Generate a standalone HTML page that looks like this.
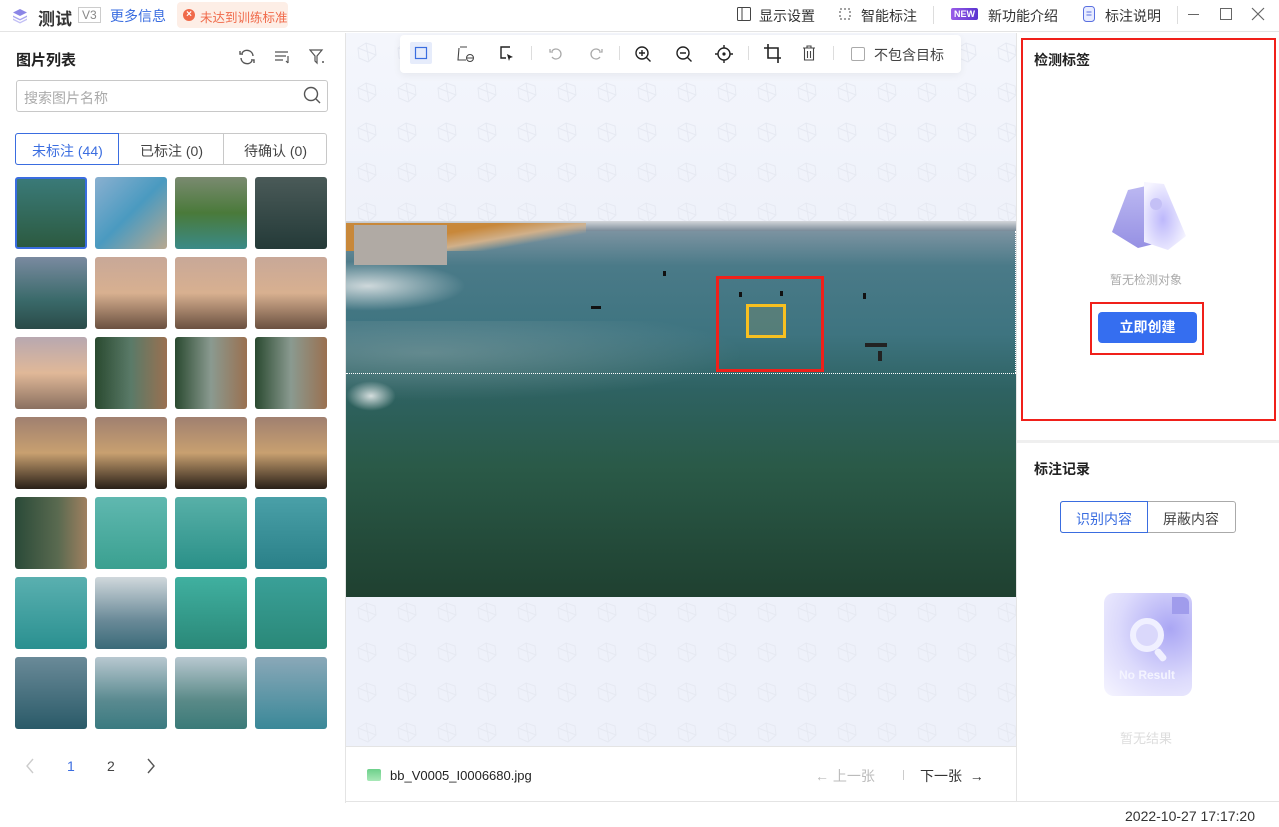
<!DOCTYPE html>
<html><head><meta charset="utf-8"><style>
*{margin:0;padding:0;box-sizing:border-box}
body{width:1279px;height:827px;overflow:hidden;background:#fff;font-family:"Liberation Sans","Noto Sans CJK SC",sans-serif;color:#333;position:relative;font-size:14px}
.a{position:absolute}
.t{position:absolute;white-space:nowrap}
.th{position:absolute;width:72px;height:72px;border-radius:3px}
svg{position:absolute}
</style></head><body>
<!-- top bar -->
<div class="a" style="left:0;top:0;width:1279px;height:32px;background:#fff;border-bottom:1px solid #e4e4e4"></div>
<svg style="left:12px;top:8px" width="16" height="16" viewBox="0 0 16 16"><path d="M8 1L15 4.5 8 8 1 4.5z" fill="#8b86e6"/><path d="M1 7.5L8 11 15 7.5 15 9 8 12.5 1 9z" fill="#a9a4ef"/><path d="M1 10.5L8 14 15 10.5 15 12 8 15.5 1 12z" fill="#c2bff5"/></svg>
<div class="t" style="left:38px;top:5px;font-size:17px;font-weight:bold;color:#333">测试</div>
<div class="t" style="left:78px;top:7px;font-size:12px;color:#888;border:1px solid #ccc;padding:0 3px;line-height:14px">V3</div>
<div class="t" style="left:110px;top:6px;font-size:14px;color:#3a6de0">更多信息</div>
<div class="a" style="left:177px;top:2px;width:111px;height:26px;background:#fdeee6;border-radius:4px"></div>
<div class="a" style="left:183px;top:9px;width:12px;height:12px;border-radius:50%;background:#f06a4a;color:#fff;font-size:10px;line-height:12px;text-align:center;font-weight:bold">×</div>
<div class="t" style="left:200px;top:7px;font-size:12.5px;color:#f06a4a">未达到训练标准</div>
<svg style="left:737px;top:7px" width="14" height="14"><rect x="0.5" y="0.5" width="13" height="13" rx="1" fill="none" stroke="#444"/><line x1="5" y1="0" x2="5" y2="14" stroke="#444"/></svg>
<div class="t" style="left:759px;top:6px;font-size:14px;color:#333">显示设置</div>
<svg style="left:838px;top:7px" width="14" height="14"><rect x="2" y="2" width="10" height="10" fill="none" stroke="#444" stroke-dasharray="2 2"/></svg>
<div class="t" style="left:861px;top:6px;font-size:14px">智能标注</div>
<div class="a" style="left:933px;top:6px;width:1px;height:18px;background:#ddd"></div>
<div class="t" style="left:951px;top:8px;font-size:9px;font-weight:bold;color:#fff;background:linear-gradient(90deg,#9a5ce8,#5a34d0);padding:0 3px;line-height:12px;border-radius:2px">NEW</div>
<div class="t" style="left:988px;top:6px;font-size:14px">新功能介绍</div>
<svg style="left:1083px;top:6px" width="12" height="16"><rect x="0.5" y="0.5" width="11" height="15" rx="3" fill="#e8ecff" stroke="#5a70e0"/><line x1="3.5" y1="6" x2="8.5" y2="6" stroke="#5a70e0"/><line x1="3.5" y1="9" x2="8.5" y2="9" stroke="#5a70e0"/></svg>
<div class="t" style="left:1105px;top:6px;font-size:14px">标注说明</div>
<div class="a" style="left:1177px;top:6px;width:1px;height:18px;background:#ddd"></div>
<div class="a" style="left:1188px;top:14px;width:11px;height:1px;background:#666"></div>
<div class="a" style="left:1220px;top:8px;width:12px;height:12px;border:1px solid #666"></div>
<svg style="left:1251px;top:7px" width="14" height="14"><path d="M1 1L13 13M13 1L1 13" stroke="#666" stroke-width="1.2"/></svg>

<!-- left panel -->
<div class="a" style="left:345px;top:33px;width:1px;height:770px;background:#e4e4e4"></div>
<div class="t" style="left:16px;top:49px;font-size:15px;font-weight:bold;color:#222">图片列表</div>
<svg style="left:238px;top:48px" width="18" height="18" viewBox="0 0 18 18"><path d="M15 8A6 6 0 0 0 4 5M3 10a6 6 0 0 0 11 3" fill="none" stroke="#555" stroke-width="1.4"/><path d="M2 3v3h3M16 15v-3h-3" fill="none" stroke="#555" stroke-width="1.4"/></svg>
<svg style="left:275px;top:50px" width="16" height="14"><path d="M0 2h13M0 6h11M0 10h8" stroke="#555" stroke-width="1.2"/><path d="M13 6v7M11 11l2 2" stroke="#555" stroke-width="1.2" fill="none"/></svg>
<svg style="left:309px;top:49px" width="16" height="16"><path d="M1 1h12l-5 6v7l-2-2V7z" fill="none" stroke="#555" stroke-width="1.2"/><circle cx="14" cy="13" r="1" fill="#555"/></svg>
<div class="a" style="left:16px;top:80px;width:312px;height:32px;border:1px solid #c8c8c8;border-radius:3px"></div>
<div class="t" style="left:24px;top:88px;font-size:14px;color:#aaa">搜索图片名称</div>
<svg style="left:303px;top:86px" width="18" height="18"><circle cx="8" cy="8" r="6.5" fill="none" stroke="#555" stroke-width="1.4"/><path d="M13 13l4 4" stroke="#555" stroke-width="1.4"/></svg>
<div class="a" style="left:15px;top:133px;width:312px;height:32px;border:1px solid #c8c8c8;border-radius:3px"></div>
<div class="a" style="left:15px;top:133px;width:104px;height:32px;border:1px solid #3a6de0;border-radius:3px 0 0 3px"></div>
<div class="a" style="left:223px;top:134px;width:1px;height:30px;background:#c8c8c8"></div>
<div class="t" style="left:32px;top:141px;font-size:14px;color:#3a6de0">未标注 (44)</div>
<div class="t" style="left:140px;top:141px;font-size:14px;color:#444">已标注 (0)</div>
<div class="t" style="left:244px;top:141px;font-size:14px;color:#444">待确认 (0)</div>

<div class="th" style="left:15px;top:177px;background:linear-gradient(#3a7a78,#2c5a40);border:2px solid #3a6de0"></div>
<div class="th" style="left:95px;top:177px;background:linear-gradient(135deg,#8ab0d0,#4a9ac0 50%,#b8a890)"></div>
<div class="th" style="left:175px;top:177px;background:linear-gradient(#7a8a70,#4a7a3a 50%,#3a8a88)"></div>
<div class="th" style="left:255px;top:177px;background:linear-gradient(#4a5a58,#243a38)"></div>
<div class="th" style="left:15px;top:257px;background:linear-gradient(#7a8aa0,#3a6a6a 60%,#2a4a48)"></div>
<div class="th" style="left:95px;top:257px;background:linear-gradient(#c8a898,#d8b090 50%,#6a5040)"></div>
<div class="th" style="left:175px;top:257px;background:linear-gradient(#c8a898,#d8b090 50%,#6a5040)"></div>
<div class="th" style="left:255px;top:257px;background:linear-gradient(#c8a898,#d8b090 50%,#6a5040)"></div>
<div class="th" style="left:15px;top:337px;background:linear-gradient(#b8a8b0,#e0b898 50%,#8a7060)"></div>
<div class="th" style="left:95px;top:337px;background:linear-gradient(90deg,#2a4a30,#5a7a68 50%,#9a7050)"></div>
<div class="th" style="left:175px;top:337px;background:linear-gradient(90deg,#2a4a30,#8a9a90 50%,#9a7050)"></div>
<div class="th" style="left:255px;top:337px;background:linear-gradient(90deg,#2a4a30,#8a9a90 50%,#9a7050)"></div>
<div class="th" style="left:15px;top:417px;background:linear-gradient(#a08070,#c8a070 50%,#2a2018)"></div>
<div class="th" style="left:95px;top:417px;background:linear-gradient(#a08070,#c8a070 50%,#2a2018)"></div>
<div class="th" style="left:175px;top:417px;background:linear-gradient(#a08070,#c8a070 50%,#2a2018)"></div>
<div class="th" style="left:255px;top:417px;background:linear-gradient(#a08070,#c8a070 50%,#2a2018)"></div>
<div class="th" style="left:15px;top:497px;background:linear-gradient(90deg,#2a4a38,#5a6a50 60%,#a08060)"></div>
<div class="th" style="left:95px;top:497px;background:linear-gradient(#60b8b0,#3aa090)"></div>
<div class="th" style="left:175px;top:497px;background:linear-gradient(#58b0a8,#2a9088)"></div>
<div class="th" style="left:255px;top:497px;background:linear-gradient(#4aa0a8,#2a8088)"></div>
<div class="th" style="left:15px;top:577px;background:linear-gradient(#5ab0b0,#2a9090)"></div>
<div class="th" style="left:95px;top:577px;background:linear-gradient(#d0d8dc,#6a8a98 60%,#3a6a78)"></div>
<div class="th" style="left:175px;top:577px;background:linear-gradient(#40b0a0,#2a8878)"></div>
<div class="th" style="left:255px;top:577px;background:linear-gradient(#3aa098,#2a8878)"></div>
<div class="th" style="left:15px;top:657px;background:linear-gradient(#6a8a98,#2a5a68)"></div>
<div class="th" style="left:95px;top:657px;background:linear-gradient(#b8c8d0,#5a8a90 60%,#3a7a80)"></div>
<div class="th" style="left:175px;top:657px;background:linear-gradient(#b8c8d0,#5a8a88 60%,#3a7a78)"></div>
<div class="th" style="left:255px;top:657px;background:linear-gradient(#8aa8b8,#3a8898)"></div>
<svg style="left:25px;top:758px" width="10" height="16"><path d="M8 1L2 8l6 7" fill="none" stroke="#ccc" stroke-width="1.4"/></svg>
<div class="t" style="left:67px;top:758px;font-size:14px;color:#3a6de0">1</div>
<div class="t" style="left:107px;top:758px;font-size:14px;color:#444">2</div>
<svg style="left:146px;top:758px" width="10" height="16"><path d="M2 1l6 7-6 7" fill="none" stroke="#555" stroke-width="1.4"/></svg>

<!-- center canvas -->
<div class="a" style="left:346px;top:33px;width:670px;height:713px;background:linear-gradient(#f4f6fc,#eef1fa 30%,#eef1fa)"></div>
<svg style="left:346px;top:33px" width="670" height="713"><defs><pattern id="p" width="40" height="40" patternUnits="userSpaceOnUse" x="5" y="2"><path d="M7 13l8-5 9 3 1 9-8 7-9-4z M15 8l3 19 M7 13l18 7" fill="none" stroke="#e6e9f2" stroke-width="1"/></pattern></defs><rect width="670" height="713" fill="url(#p)"/></svg>
<div class="a" style="left:400px;top:35px;width:561px;height:38px;background:#fff;border-radius:4px;box-shadow:0 2px 8px rgba(0,0,0,.06)"></div>
<div class="a" style="left:410px;top:42px;width:22px;height:22px;background:#e6ecfb;border-radius:2px"></div>
<svg style="left:414px;top:46px" width="14" height="14"><rect x="1.5" y="1.5" width="11" height="11" fill="none" stroke="#3a6de0" stroke-width="1.2"/></svg>
<svg style="left:457px;top:45px" width="18" height="18"><path d="M3 2h7M2 3l-1 12h8" fill="none" stroke="#444" stroke-width="1.1"/><circle cx="13" cy="13" r="3.5" fill="none" stroke="#444"/><path d="M10 13h6" stroke="#444"/></svg>
<svg style="left:499px;top:46px" width="16" height="16"><path d="M11 1H2v11h5" fill="none" stroke="#222" stroke-width="1.4"/><path d="M8 8l6 3-3 1-1 3z" fill="#222"/></svg>
<div class="a" style="left:531px;top:46px;width:1px;height:14px;background:#ddd"></div>
<svg style="left:548px;top:46px" width="16" height="16"><path d="M4 5a5 5 0 1 1 0 6" fill="none" stroke="#aaa" stroke-width="1.3"/><path d="M2 3v3h3" fill="none" stroke="#aaa" stroke-width="1.3"/></svg>
<svg style="left:588px;top:46px" width="16" height="16"><path d="M12 5a5 5 0 1 0 0 6" fill="none" stroke="#aaa" stroke-width="1.3"/><path d="M14 3v3h-3" fill="none" stroke="#aaa" stroke-width="1.3"/></svg>
<div class="a" style="left:619px;top:46px;width:1px;height:14px;background:#ddd"></div>
<svg style="left:634px;top:45px" width="18" height="18"><circle cx="8" cy="8" r="6" fill="none" stroke="#222" stroke-width="1.4"/><path d="M12.5 12.5l4 4M5 8h6M8 5v6" stroke="#222" stroke-width="1.4"/></svg>
<svg style="left:675px;top:45px" width="18" height="18"><circle cx="8" cy="8" r="6" fill="none" stroke="#222" stroke-width="1.4"/><path d="M12.5 12.5l4 4M5 8h6" stroke="#222" stroke-width="1.4"/></svg>
<svg style="left:715px;top:45px" width="18" height="18"><circle cx="9" cy="9" r="6" fill="none" stroke="#222" stroke-width="1.4"/><circle cx="9" cy="9" r="1.6" fill="#222"/><path d="M9 0v3M9 15v3M0 9h3M15 9h3" stroke="#222" stroke-width="1.4"/></svg>
<div class="a" style="left:748px;top:46px;width:1px;height:14px;background:#ddd"></div>
<svg style="left:764px;top:44px" width="18" height="19"><path d="M4 0v14h13M0 4h14v15" fill="none" stroke="#222" stroke-width="1.6"/></svg>
<svg style="left:802px;top:45px" width="14" height="16"><path d="M1 3h12M5 3V1h4v2M2.5 3v12h9V3M5.5 6v7M8.5 6v7" fill="none" stroke="#444" stroke-width="1.1"/></svg>
<div class="a" style="left:833px;top:46px;width:1px;height:14px;background:#ddd"></div>
<div class="a" style="left:851px;top:47px;width:14px;height:14px;border:1px solid #aaa;border-radius:2px;background:#fff"></div>
<div class="t" style="left:874px;top:45px;font-size:14px;color:#444">不包含目标</div>

<!-- image -->
<div class="a" style="left:346px;top:221px;width:670px;height:376px;overflow:hidden;background:linear-gradient(180deg,#8a9aa8 0%,#4a7a88 12%,#3e7480 30%,#2e6262 45%,#2a5a48 65%,#1f4030 100%)">
 <div class="a" style="left:0;top:0;width:670px;height:10px;background:linear-gradient(#d4d6da,#7a8a98)"></div>
 <div class="a" style="left:0;top:2px;width:240px;height:28px;background:linear-gradient(170deg,#c8883a 40%,#d0b08a 60%,transparent 75%)"></div>
 <div class="a" style="left:-20px;top:40px;width:140px;height:50px;background:radial-gradient(ellipse at 30% 50%,rgba(240,240,240,.8),transparent 70%)"></div>
 <div class="a" style="left:0;top:100px;width:400px;height:80px;background:radial-gradient(ellipse at 20% 40%,rgba(180,190,190,.35),transparent 70%)"></div>
 <div class="a" style="left:0;top:160px;width:50px;height:30px;background:radial-gradient(ellipse,rgba(230,235,235,.9),transparent 70%)"></div>
 <div class="a" style="left:8px;top:4px;width:93px;height:40px;background:#b0aaa4"></div>
 <div class="a" style="left:0;top:152px;width:670px;height:0;border-top:1px dotted #fff"></div>
 <div class="a" style="left:669px;top:10px;width:0;height:142px;border-left:1px dotted #fff"></div>
 <div class="a" style="left:517px;top:72px;width:3px;height:6px;background:#111"></div>
 <div class="a" style="left:317px;top:50px;width:3px;height:5px;background:#111"></div>
 <div class="a" style="left:393px;top:71px;width:3px;height:5px;background:#111"></div>
 <div class="a" style="left:434px;top:70px;width:3px;height:5px;background:#111"></div>
 <div class="a" style="left:245px;top:85px;width:10px;height:3px;background:#111"></div>
 <div class="a" style="left:519px;top:122px;width:22px;height:4px;background:#222"></div>
 <div class="a" style="left:532px;top:130px;width:4px;height:10px;background:#222"></div>
 <div class="a" style="left:370px;top:55px;width:108px;height:96px;border:3px solid #f0201a"></div>
 <div class="a" style="left:400px;top:83px;width:40px;height:34px;border:3px solid #f8c020;background:rgba(120,140,110,.4)"></div>
</div>

<!-- bottom file bar -->
<div class="a" style="left:346px;top:746px;width:670px;height:1px;background:#e4e4e4"></div>
<div class="a" style="left:346px;top:801px;width:933px;height:1px;background:#e4e4e4"></div>
<div class="a" style="left:367px;top:769px;width:14px;height:12px;background:linear-gradient(#6cd08a,#a8e8b8);border-radius:2px"></div>
<div class="t" style="left:390px;top:768px;font-size:13px;color:#222">bb_V0005_I0006680.jpg</div>
<div class="t" style="left:815px;top:766px;font-size:14px;color:#bbb">←&nbsp;上一张</div>
<div class="a" style="left:903px;top:770px;width:1px;height:10px;background:#ccc"></div>
<div class="t" style="left:920px;top:766px;font-size:14px;color:#333">下一张&nbsp;&nbsp;→</div>
<div class="t" style="left:1125px;top:808px;font-size:14px;color:#333">2022-10-27 17:17:20</div>

<!-- right panel -->
<div class="a" style="left:1016px;top:33px;width:1px;height:769px;background:#e4e4e4"></div>
<div class="a" style="left:1021px;top:38px;width:255px;height:383px;border:2px solid #f0201a"></div>
<div class="t" style="left:1034px;top:50px;font-size:14px;font-weight:bold;color:#222">检测标签</div>
<svg style="left:1108px;top:178px" width="86" height="82"><defs><linearGradient id="g1" x1="0" y1="0" x2="0" y2="1"><stop offset="0" stop-color="#b4b0f0"/><stop offset="1" stop-color="#8a84e0"/></linearGradient><radialGradient id="g2" cx=".45" cy=".55" r=".6"><stop offset="0" stop-color="#bdb8fb"/><stop offset="1" stop-color="#f6f5ff"/></radialGradient></defs><path d="M20 12l18-4 10 4 -2 54-16 4-26-16z" fill="url(#g1)" opacity=".9"/><path d="M36 4l20 2 22 52-18 14-24-8z" fill="url(#g2)"/><circle cx="48" cy="26" r="6" fill="#c4c0f6"/></svg>
<div class="t" style="left:1110px;top:271px;font-size:12px;color:#aaa">暂无检测对象</div>
<div class="a" style="left:1090px;top:302px;width:114px;height:53px;border:2px solid #f0201a"></div>
<div class="a" style="left:1098px;top:312px;width:99px;height:31px;background:#356ef0;border-radius:4px;color:#fff;font-size:14px;font-weight:bold;text-align:center;line-height:31px">立即创建</div>
<div class="a" style="left:1017px;top:440px;width:262px;height:3px;background:#efefef"></div>
<div class="t" style="left:1034px;top:459px;font-size:14px;font-weight:bold;color:#222">标注记录</div>
<div class="a" style="left:1060px;top:501px;width:176px;height:32px;border:1px solid #aaa;border-radius:3px"></div>
<div class="a" style="left:1060px;top:501px;width:88px;height:32px;border:1px solid #3a6de0;border-radius:3px 0 0 3px"></div>
<div class="t" style="left:1076px;top:509px;font-size:14px;color:#3a6de0">识别内容</div>
<div class="t" style="left:1163px;top:509px;font-size:14px;color:#444">屏蔽内容</div>
<div class="a" style="left:1104px;top:593px;width:88px;height:103px;border-radius:10px;background:radial-gradient(circle at 75% 35%,#aaa6f4,#dcdafc 55%,#f6f5ff);"></div>
<div class="a" style="left:1172px;top:597px;width:17px;height:17px;background:#a09cec;border-radius:0 6px 0 0"></div>
<div class="a" style="left:1130px;top:618px;width:34px;height:34px;border-radius:50%;border:6px solid #f0f0ff;background:#dad8fb"></div>
<div class="a" style="left:1157px;top:648px;width:7px;height:14px;background:#f0f0ff;border-radius:3px;transform:rotate(-40deg)"></div>
<div class="t" style="left:1119px;top:668px;font-size:12px;font-weight:bold;color:#f4f4ff">No Result</div>
<div class="t" style="left:1120px;top:728px;font-size:13px;color:#ddd">暂无结果</div>
</body></html>
